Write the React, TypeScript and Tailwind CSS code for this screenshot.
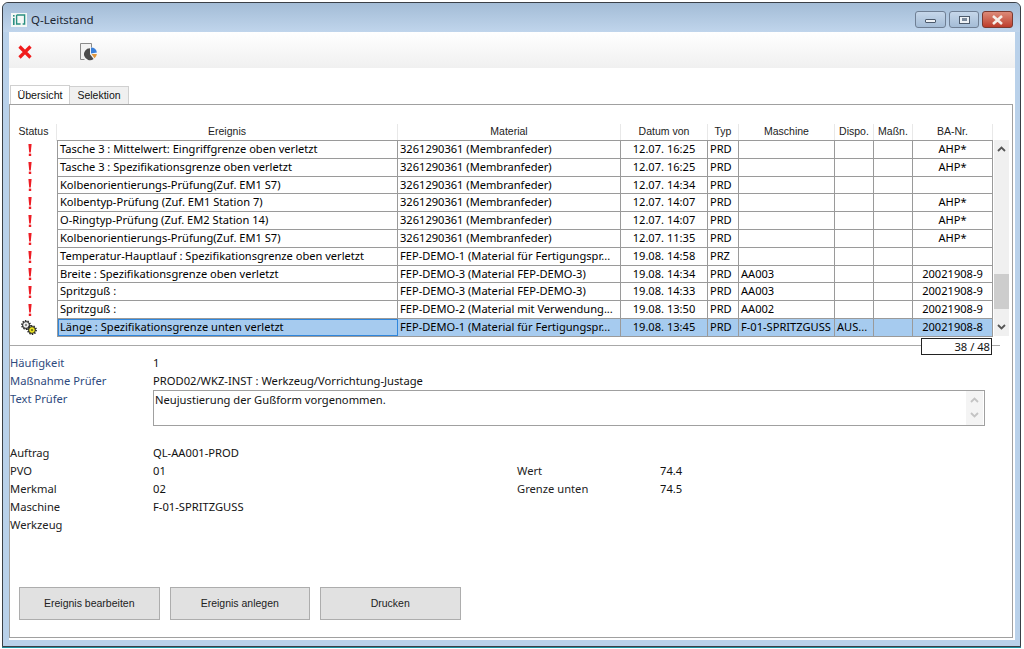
import React from "react";

const FONT = "[font-family:'Noto_Sans','Liberation_Sans',sans-serif]";

type Row = { e: string; m: string; d: string; t: string; ma?: string; di?: string; ba?: string; sel?: boolean };

const rows: Row[] = [
  { e: "Tasche 3 : Mittelwert: Eingriffgrenze oben verletzt", m: "3261290361 (Membranfeder)", d: "12.07. 16:25", t: "PRD", ba: "AHP*" },
  { e: "Tasche 3 : Spezifikationsgrenze oben verletzt", m: "3261290361 (Membranfeder)", d: "12.07. 16:25", t: "PRD", ba: "AHP*" },
  { e: "Kolbenorientierungs-Prüfung(Zuf. EM1 S7)", m: "3261290361 (Membranfeder)", d: "12.07. 14:34", t: "PRD" },
  { e: "Kolbentyp-Prüfung (Zuf. EM1 Station 7)", m: "3261290361 (Membranfeder)", d: "12.07. 14:07", t: "PRD", ba: "AHP*" },
  { e: "O-Ringtyp-Prüfung (Zuf. EM2 Station 14)", m: "3261290361 (Membranfeder)", d: "12.07. 14:07", t: "PRD", ba: "AHP*" },
  { e: "Kolbenorientierungs-Prüfung(Zuf. EM1 S7)", m: "3261290361 (Membranfeder)", d: "12.07. 11:35", t: "PRD", ba: "AHP*" },
  { e: "Temperatur-Hauptlauf : Spezifikationsgrenze oben verletzt", m: "FEP-DEMO-1 (Material für Fertigungspr...", d: "19.08. 14:58", t: "PRZ" },
  { e: "Breite : Spezifikationsgrenze oben verletzt", m: "FEP-DEMO-3 (Material FEP-DEMO-3)", d: "19.08. 14:34", t: "PRD", ma: "AA003", ba: "20021908-9" },
  { e: "Spritzguß :", m: "FEP-DEMO-3 (Material FEP-DEMO-3)", d: "19.08. 14:33", t: "PRD", ma: "AA003", ba: "20021908-9" },
  { e: "Spritzguß :", m: "FEP-DEMO-2 (Material mit Verwendung...", d: "19.08. 13:50", t: "PRD", ma: "AA002", ba: "20021908-9" },
  { e: "Länge : Spezifikationsgrenze unten verletzt", m: "FEP-DEMO-1 (Material für Fertigungspr...", d: "19.08. 13:45", t: "PRD", ma: "F-01-SPRITZGUSS", di: "AUS...", ba: "20021908-8", sel: true },
];

function Gears() {
  return (
    <svg width="17" height="15" viewBox="0 0 17 15">
      <circle cx="5" cy="5" r="3.4" fill="#f2f2f2" stroke="#222" strokeWidth="1" />
      <circle cx="5" cy="5" r="4.2" fill="none" stroke="#222" strokeWidth="1.4" strokeDasharray="1.4 1.2" />
      <circle cx="5" cy="5" r="1.2" fill="#888" />
      <circle cx="11" cy="10" r="3.4" fill="#e8e020" stroke="#222" strokeWidth="1" />
      <circle cx="11" cy="10" r="4.2" fill="none" stroke="#222" strokeWidth="1.4" strokeDasharray="1.4 1.2" />
      <circle cx="11" cy="10" r="1.1" fill="#6a6a10" />
    </svg>
  );
}

function Cell({ w, sel, center, focus, children }: { w: string; sel?: boolean; center?: boolean; focus?: boolean; children?: React.ReactNode }) {
  return (
    <div className={`${w} h-full shrink-0 border-r border-[#9a9a9a] px-[2px] overflow-hidden whitespace-nowrap leading-[16px] text-[11.1px] text-black ${center ? "text-center" : ""} ${sel ? "bg-[#a6cbef]" : "bg-white"} ${focus ? "outline outline-[#2f86dc] -outline-offset-1" : ""}`}>
      {children}
    </div>
  );
}

function Bang() {
  return (
    <svg width="4" height="12" viewBox="0 0 4 12">
      <path d="M0.4 0h3.2L2.8 8.6H1.2z" fill="#ee1c24" />
      <rect x="0.8" y="9.6" width="2.4" height="2.4" fill="#ee1c24" />
    </svg>
  );
}

function Chevron({ up, color = "#555" }: { up?: boolean; color?: string }) {
  return (
    <svg width="9" height="6" viewBox="0 0 9 6">
      <path d={up ? "M1 5l3.5-3.5L8 5" : "M1 1l3.5 3.5L8 1"} fill="none" stroke={color} strokeWidth="1.8" />
    </svg>
  );
}

function Head({ w, children }: { w: string; children?: React.ReactNode }) {
  return (
    <div className={`${w} shrink-0 h-full text-center border-r border-[#e8e8e8] leading-[15px] text-[10.5px] text-[#222] [font-family:'Liberation_Sans',sans-serif]`}>
      {children}
    </div>
  );
}

function WinBtn({ cls, children }: { cls: string; children: React.ReactNode }) {
  return <div className={`h-[17px] rounded-[3px] border border-[#6f7f94] flex items-center justify-center ${cls}`}>{children}</div>;
}

function Field({ label, value, blue }: { label: string; value?: string; blue?: boolean }) {
  return (
    <div className="flex h-[17.8px] leading-[18px]">
      <div className={`w-[143px] shrink-0 ${blue ? "text-[#2e4a7d]" : "text-[#222]"}`}>{label}</div>
      <div className="text-[#111] whitespace-nowrap">{value}</div>
    </div>
  );
}

function Btn({ children }: { children: React.ReactNode }) {
  return (
    <button className="w-[140.5px] h-[33px] bg-[#e1e1e1] border border-[#adadad] text-[10.5px] text-[#222] [font-family:'Liberation_Sans',sans-serif]">
      {children}
    </button>
  );
}

export default function App() {
  return (
    <div className={`w-[1024px] h-[649px] bg-white pl-[2px] pr-[3px] pt-[2px] pb-[2px] text-[11.2px] text-[#111] ${FONT}`}>
      <div className="w-full h-full flex flex-col border border-[#3a3f46] rounded-t-[6px] bg-[#b9d1ea] shadow-[0_1px_0_#1f8fa0]">
        {/* title bar */}
        <div className="h-[29px] shrink-0 flex items-start rounded-t-[6px] bg-gradient-to-b from-[#a3bcd6] to-[#c0d5ec]">
          <div className="ml-[8px] mt-[10px] w-[16px] h-[14px] bg-[#f4f8f6] flex items-center justify-center">
            <svg width="14" height="12" viewBox="0 0 14 12">
              <rect x="1" y="1" width="1.6" height="1.6" fill="#2a8f80" />
              <rect x="1" y="4" width="1.6" height="7" fill="#2a8f80" />
              <path d="M4.6 1h8v9h-2M4.6 1v9h4" fill="none" stroke="#2a8f80" strokeWidth="1.4" />
            </svg>
          </div>
          <div className="ml-[4px] mt-[9px] text-[11.5px] leading-[16px] text-[#1c2733]">Q-Leitstand</div>
          <div className="ml-auto mr-[7px] mt-[8px] flex gap-[3px] items-start">
            <WinBtn cls="w-[31px] bg-gradient-to-b from-[#c6d7ea] to-[#a4bcd6]">
              <div className="mt-[3px] w-[11px] h-[4px] bg-[#eef2f6] border border-[#4c5a6c] rounded-[1px]" />
            </WinBtn>
            <WinBtn cls="w-[30px] bg-gradient-to-b from-[#c6d7ea] to-[#a4bcd6]">
              <div className="w-[11px] h-[8px] bg-[#eef2f6] border border-[#4c5a6c] flex items-center justify-center">
                <div className="w-[5px] h-[3px] bg-[#7b8a9c]" />
              </div>
            </WinBtn>
            <WinBtn cls="w-[31px] border-[#7a3a30] bg-gradient-to-b from-[#dc8a78] to-[#bd3c2b]">
              <svg width="13" height="10" viewBox="0 0 13 10">
                <path d="M2 1l9 8M11 1l-9 8" stroke="#f6efe9" strokeWidth="2.6" />
              </svg>
            </WinBtn>
          </div>
        </div>

        {/* client area */}
        <div className="ml-[6px] mr-[5px] mb-[6px] flex-1 flex flex-col bg-white min-h-0">
          {/* toolbar */}
          <div className="h-[36px] shrink-0 flex items-start bg-gradient-to-b from-white to-[#f0f0f0]">
            <svg className="ml-[9px] mt-[13px]" width="14" height="14" viewBox="0 0 14 14">
              <path d="M1.5 1.5l11 11M12.5 1.5l-11 11" stroke="#f01c1c" strokeWidth="3.2" />
            </svg>
            <svg className="ml-[48px] mt-[11px]" width="17" height="18" viewBox="0 0 17 18">
              <path d="M0.5 0.5h11v4M0.5 0.5v16h4" fill="#f2f2f2" stroke="#8a8a8a" />
              <rect x="1" y="1" width="10" height="15" fill="#f2f2f2" />
              <path d="M1 16.5h3" stroke="#8a8a8a" />
              <path d="M11 10.5V4.5a6 6 0 0 1 5.9 5z" fill="#3a7fd8" />
              <path d="M16.9 11a6 6 0 0 1-2.4 4.2l-3-4.2z" fill="#e0963c" />
              <path d="M10 5.2v6l3.6 4.8A6 6 0 1 1 10 5.2z" fill="#4c4c4c" />
            </svg>
          </div>

          {/* tabs */}
          <div className="h-[18px] mt-[18px] shrink-0 flex items-end pl-[1px] relative z-10">
            <div className="h-[19px] w-[60px] bg-white border-x border-t border-[#d0d0d0] text-center leading-[18px] text-[10.7px] [font-family:'Liberation_Sans',sans-serif]">Übersicht</div>
            <div className="h-[18px] w-[59px] bg-[#f0f0f0] border-r border-t border-[#d0d0d0] text-center leading-[17px] text-[10.5px] [font-family:'Liberation_Sans',sans-serif]">Selektion</div>
          </div>

          {/* panel */}
          <div className="flex-1 min-h-0 mr-[2px] mb-[2px] border border-[#a0a0a0] flex flex-col relative">
            {/* header */}
            <div className="flex h-[17px] mt-[19px] pl-[1px]">
              <Head w="w-[46px]">Status</Head>
              <Head w="w-[341px]">Ereignis</Head>
              <Head w="w-[223px]">Material</Head>
              <Head w="w-[87px]">Datum von</Head>
              <Head w="w-[31px]">Typ</Head>
              <Head w="w-[96px]">Maschine</Head>
              <Head w="w-[39px]">Dispo.</Head>
              <Head w="w-[39px]">Maßn.</Head>
              <Head w="w-[80px]">BA-Nr.</Head>
            </div>
            <div className="flex">
              <div className="flex flex-col w-[46px] ml-[1px] shrink-0">
                {rows.map((r, i) => (
                  <div key={i} className="h-[17.8px] flex items-center justify-center pr-[9px]">
                    {r.sel ? <Gears /> : <Bang />}
                  </div>
                ))}
              </div>
              <div className="w-[936px] shrink-0 flex flex-col border-t border-[#9a9a9a] -mt-px">
                {rows.map((r, i) => (
                  <div key={i} className="h-[17.8px] flex border-b border-[#9a9a9a] border-l">
                    <Cell w="w-[340px]" sel={r.sel} focus={r.sel}>{r.e}</Cell>
                    <Cell w="w-[223px]" sel={r.sel}>{r.m}</Cell>
                    <Cell w="w-[87px]" sel={r.sel} center>{r.d}</Cell>
                    <Cell w="w-[31px]" sel={r.sel}>{r.t}</Cell>
                    <Cell w="w-[96px]" sel={r.sel}>{r.ma}</Cell>
                    <Cell w="w-[39px]" sel={r.sel}>{r.di}</Cell>
                    <Cell w="w-[39px]" sel={r.sel} />
                    <Cell w="w-[80px]" sel={r.sel} center>{r.ba}</Cell>
                  </div>
                ))}
              </div>
              <div className="w-[15px] ml-[1px] shrink-0 -mt-px bg-[#f0f0f0] flex flex-col items-center h-[196px]">
                <div className="h-[18px] flex items-center"><Chevron up /></div>
                <div className="flex-1 w-full flex flex-col">
                  <div className="mt-[116px] h-[35px] w-full bg-[#cdcdcd]" />
                </div>
                <div className="h-[18px] flex items-center"><Chevron /></div>
              </div>
            </div>

            {/* divider with counter */}
            <div className="relative h-[18px] shrink-0">
              <div className="absolute left-0 top-[8px] w-[990px] h-px bg-[#a8a8a8]" />
              <div className="absolute left-[911px] top-[1px] w-[71px] h-[17px] bg-white border border-[#222] text-right leading-[15px] pr-[1px]">38 / 48</div>
            </div>

            {/* details */}
            <div className="flex flex-col -mt-[0.6px]">
              <Field label="Häufigkeit" value="1" blue />
              <Field label="Maßnahme Prüfer" value="PROD02/WKZ-INST : Werkzeug/Vorrichtung-Justage" blue />
              <div className="flex h-[36px] mb-[18.6px]">
                <div className="w-[143px] shrink-0 text-[#2e4a7d] leading-[18px]">Text Prüfer</div>
                <div className="w-[832px] h-[36px] border border-[#a0a0a0] flex justify-between pl-[1px] leading-[16px] pt-[1px]">
                  <span>Neujustierung der Gußform vorgenommen.</span>
                  <div className="w-[17px] bg-[#f4f4f4] flex flex-col items-center justify-center gap-[9px] -mt-px h-[34px] mr-[1px]">
                    <Chevron up color="#c4c4c4" />
                    <Chevron color="#c4c4c4" />
                  </div>
                </div>
              </div>
              <div className="flex">
                <div className="w-[507px] shrink-0">
                  <Field label="Auftrag" value="QL-AA001-PROD" />
                  <Field label="PVO" value="01" />
                  <Field label="Merkmal" value="02" />
                  <Field label="Maschine" value="F-01-SPRITZGUSS" />
                  <Field label="Werkzeug" />
                </div>
                <div className="pt-[18px]">
                  <div className="flex h-[18px] leading-[18px]"><div className="w-[143px] text-[#222]">Wert</div><div>74.4</div></div>
                  <div className="flex h-[18px] leading-[18px]"><div className="w-[143px] text-[#222]">Grenze unten</div><div>74.5</div></div>
                </div>
              </div>
            </div>

            {/* buttons */}
            <div className="flex gap-[10px] pl-[9px] mt-[54px]">
              <Btn>Ereignis bearbeiten</Btn>
              <Btn>Ereignis anlegen</Btn>
              <Btn>Drucken</Btn>
            </div>
          </div>
        </div>
      </div>
    </div>
  );
}
